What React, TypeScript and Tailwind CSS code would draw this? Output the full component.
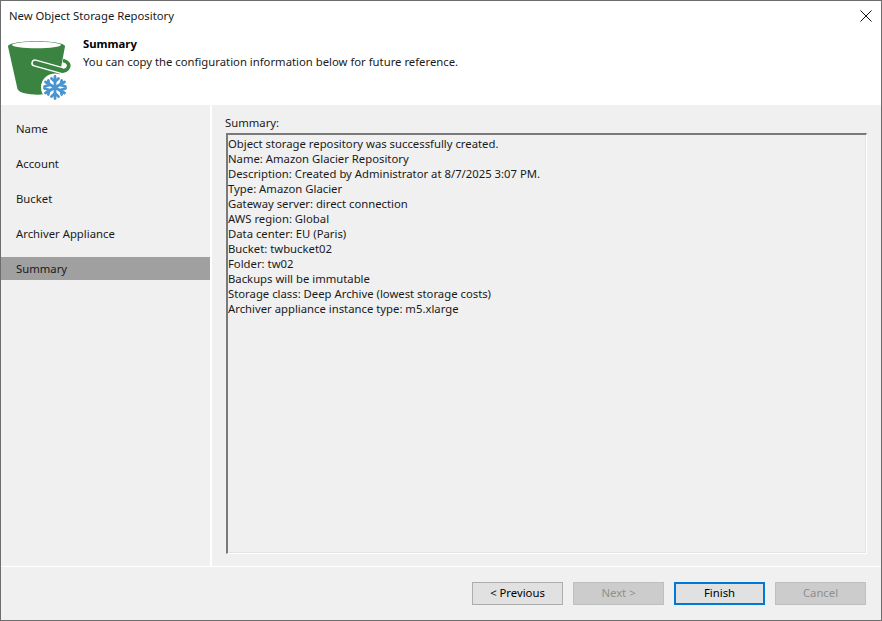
const lines = [
  "Object storage repository was successfully created.",
  "Name: Amazon Glacier Repository",
  "Description: Created by Administrator at 8/7/2025 3:07 PM.",
  "Type: Amazon Glacier",
  "Gateway server: direct connection",
  "AWS region: Global",
  "Data center: EU (Paris)",
  "Bucket: twbucket02",
  "Folder: tw02",
  "Backups will be immutable",
  "Storage class: Deep Archive (lowest storage costs)",
  "Archiver appliance instance type: m5.xlarge",
];
const steps = ["Name", "Account", "Bucket", "Archiver Appliance", "Summary"];

function BucketIcon() {
  return (
    <svg width="64" height="64" viewBox="0 0 64 64" className="block">
      <path d="M0 6.5 C0 -0.5 57 -0.5 57 6.5 L49 49 C47.5 56.5 12 56.5 9.5 49 Z" fill="#3a8340" />
      <ellipse cx="28.5" cy="5" rx="24.5" ry="3.2" fill="#ffffff" />
      <path d="M27 23 L52 30" fill="none" stroke="#ffffff" strokeWidth="7.5" strokeLinecap="round" />
      <path d="M27 23 L54 30.5" fill="none" stroke="#3a8340" strokeWidth="4.5" strokeLinecap="round" />
      <path d="M55 20.5 C60 21.5 62 25 60 28 C58.5 30.5 56 31 53 31" fill="none" stroke="#3a8340" strokeWidth="3.6" />
      <circle cx="47" cy="47.5" r="14" fill="#ffffff" />
      <g stroke="#4a94cf" strokeWidth="2.8" strokeLinecap="round" fill="none">
        <path d="M47 36.5 V58.5" />
        <path d="M37.5 42 L56.5 53" />
        <path d="M37.5 53 L56.5 42" />
        <path d="M43.5 38.5 L47 41.7 L50.5 38.5" />
        <path d="M43.5 56.5 L47 53.3 L50.5 56.5" />
        <path d="M36.5 46.5 L41.3 45 L40.3 40.5" />
        <path d="M57.5 48.5 L52.7 50 L53.7 54.5" />
        <path d="M36.5 48.5 L41.3 50 L40.3 54.5" />
        <path d="M57.5 46.5 L52.7 45 L53.7 40.5" />
      </g>
    </svg>
  );
}

function Btn({ label, kind }: { label: string; kind: "normal" | "disabled" | "focus" }) {
  const cls =
    kind === "disabled"
      ? "bg-[#cccccc] border border-[#bfbfbf] text-[#8f8f8f]"
      : kind === "focus"
      ? "bg-[#e1e1e1] border-2 border-[#0078d7] text-black"
      : "bg-[#e1e1e1] border border-[#adadad] text-black";
  return (
    <div className={`w-[91px] h-[23px] flex items-center justify-center ${cls}`}>{label}</div>
  );
}

export default function App() {
  return (
    <div
      className="w-[882px] h-[621px] flex flex-col bg-[#f0f0f0] border border-[#6d6d6d] text-[11.3px] text-[#1a1a1a] overflow-hidden"
      style={{ fontFamily: '"Noto Sans", "Open Sans", sans-serif' }}
    >
      <div className="h-[104px] bg-white flex flex-col shrink-0">
        <div className="h-[30px] flex items-center justify-between pl-[8px] pr-[9px] shrink-0">
          <span className="leading-[30px]">New Object Storage Repository</span>
          <svg width="12" height="12" viewBox="0 0 12 12">
            <path d="M0.5 0.5 L11.5 11.5 M11.5 0.5 L0.5 11.5" stroke="#111" strokeWidth="1" fill="none" />
          </svg>
        </div>
        <div className="flex pl-[7px]">
          <div className="mt-[9px] w-[64px] h-[64px]">
            <BucketIcon />
          </div>
          <div className="ml-[11px] mt-[4px] leading-[18px]">
            <div className="font-bold text-black">Summary</div>
            <div>You can copy the configuration information below for future reference.</div>
          </div>
        </div>
      </div>
      <div className="flex-1 flex min-h-0 border-b border-b-white">
        <div className="w-[209px] shrink-0 pt-[12px]">
          {steps.map((s) => (
            <div
              key={s}
              className={`h-[23px] mb-[12px] pl-[15px] pt-[1px] flex items-center ${s === "Summary" ? "bg-[#a0a0a0]" : ""}`}
            >
              {s}
            </div>
          ))}
        </div>
        <div className="w-[2px] bg-white shrink-0" />
        <div className="flex-1 flex flex-col pl-[13px] pr-[14px] pt-[9px] pb-[12px] min-w-0">
          <div className="h-[19px] leading-[17px]">Summary:</div>
          <div className="ml-[1px] flex-1 border-t-2 border-l-2 border-t-[#7a7a7a] border-l-[#7a7a7a] border-r border-b border-r-white border-b-white shadow-[inset_-1px_-1px_0_#e3e3e3] pt-[1px] leading-[15px]">
            {lines.map((l) => (
              <div key={l} className="h-[15px] whitespace-nowrap">
                {l}
              </div>
            ))}
          </div>
        </div>
      </div>
      <div className="h-[53px] shrink-0 flex items-start justify-end gap-[10px] pt-[15px] pr-[15px]">
        <Btn label="< Previous" kind="normal" />
        <Btn label="Next >" kind="disabled" />
        <Btn label="Finish" kind="focus" />
        <Btn label="Cancel" kind="disabled" />
      </div>
    </div>
  );
}
